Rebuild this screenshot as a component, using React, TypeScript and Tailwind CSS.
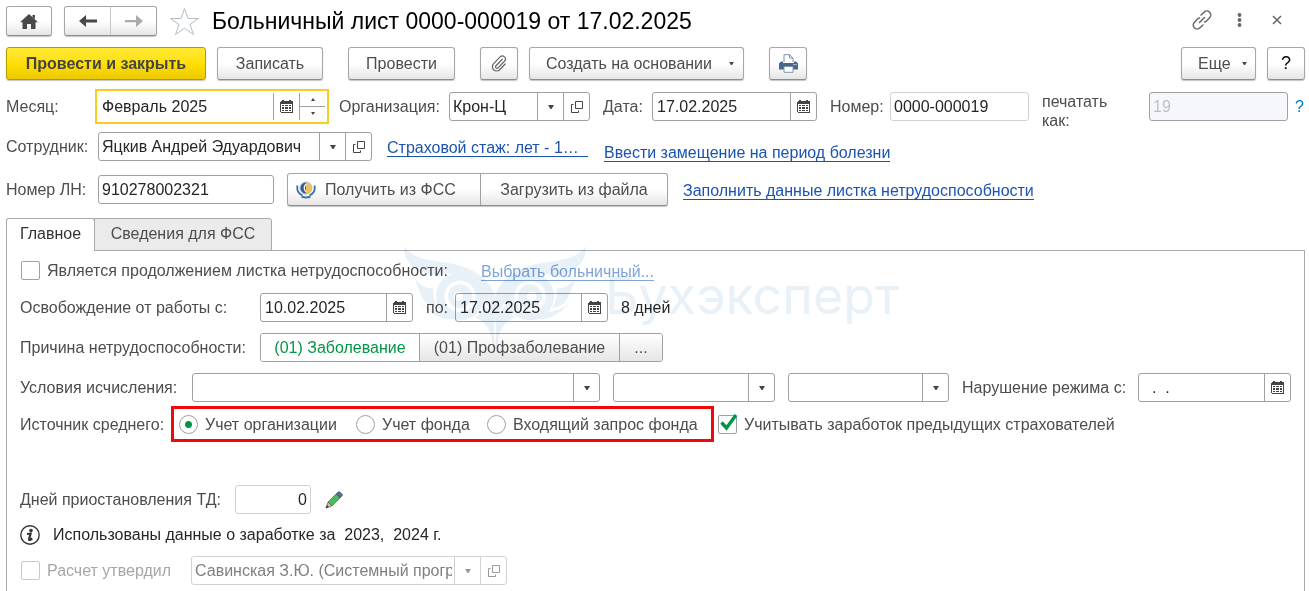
import type { ReactNode } from "react";

const button =
  "flex shrink-0 items-center justify-center rounded-[3px] border border-[#a6a6a6] border-b-[#8c8c8c] bg-linear-to-b from-white from-50% to-[#e6e6e6] text-[#4d4d4d] whitespace-nowrap shadow-[0_1px_1px_#c4c4c4]";
const label = "shrink-0 whitespace-nowrap text-[#4d4d4d]";
const link = "whitespace-nowrap text-[#1a54b0] border-b border-[#1a54b0] leading-[17px]";

function CalendarIcon() {
  return (
    <svg width="13" height="13" viewBox="0 0 13 13" shapeRendering="crispEdges">
      <path d="M1 1H2V0H4V1H9V0H11V1H12L13 2V12L12 13H1L0 12V2z" fill="#444" />
      <path d="M1 4h11v8H1z" fill="white" />
      <path d="M2 5h2v1H2zM5 5h3v1H5zM9 5h2v1H9zM2 7h2v2H2zM5 7h3v2H5zM9 7h2v2H9zM2 10h2v1H2zM5 10h3v1H5zM9 10h2v1H9z" fill="#444" />
    </svg>
  );
}

function OpenIcon() {
  return (
    <svg width="12" height="12" viewBox="0 0 12 12" fill="none" stroke="currentColor">
      <path d="M4.500.5h7v7h-7zM2.500 3.500h-2v8h7v-2" />
    </svg>
  );
}

function Caret() {
  return (
    <svg width="6" height="4" viewBox="0 0 6 4" fill="currentColor">
      <path d="M0 0h6L3.500 4h-1z" />
    </svg>
  );
}

function SmallCaret() {
  return (
    <svg width="5" height="3" viewBox="0 0 5 3" fill="currentColor">
      <path d="M0 0h5L3 3H2z" />
    </svg>
  );
}

function DateField({ id, value, width, name }: { id: string; value: string; width: string; name?: string }) {
  return (
    <div className={`flex h-[29px] shrink-0 overflow-hidden rounded-[3px] border border-[#a0a0a0] bg-white ${width}`}>
      <input id={id} aria-label={name} defaultValue={value} className="min-w-0 flex-1 px-1 text-[#262626] outline-none" />
      <button type="button" aria-label="Открыть календарь" className="flex w-[26px] items-center justify-center border-l border-[#a0a0a0]">
        <CalendarIcon />
      </button>
    </div>
  );
}

function Combo({
  id,
  value,
  width,
  open,
  disabled,
  name,
}: {
  id: string;
  value?: string;
  width: string;
  open?: boolean;
  disabled?: boolean;
  name?: string;
}) {
  const line = disabled ? "border-[#d2d2d2]" : "border-[#a0a0a0]";
  const ink = disabled ? "text-[#999]" : "text-[#444]";
  return (
    <div className={`flex h-[29px] overflow-hidden rounded-[3px] border bg-white ${line} ${ink} ${width}`}>
      <div className="relative min-w-0 flex-1">
        <select
          id={id}
          aria-label={name}
          disabled={disabled}
          className={`h-full w-full appearance-none overflow-hidden pr-7 pl-[3px] text-clip whitespace-nowrap opacity-100 outline-none ${disabled ? "text-[#808080]" : "text-[#262626]"}`}
        >
          <option>{value}</option>
        </select>
        <span className={`pointer-events-none absolute inset-y-0 right-0 flex w-[26px] items-center justify-center border-l ${line}`}>
          <Caret />
        </span>
      </div>
      {open && (
        <button type="button" aria-label="Открыть" className={`flex w-[26px] shrink-0 items-center justify-center border-l ${line}`}>
          <OpenIcon />
        </button>
      )}
    </div>
  );
}

function Radio({ text, checked, width }: { text: string; checked?: boolean; width?: string }) {
  return (
    <label className={`flex shrink-0 items-center gap-[7px] whitespace-nowrap text-[#4d4d4d] ${width ?? ""}`}>
      <input
        type="radio"
        name="source"
        defaultChecked={checked}
        className="size-[19px] appearance-none rounded-full border border-[#a0a0a0] bg-white checked:bg-[radial-gradient(circle,#009646_0_3px,white_4px)]"
      />
      {text}
    </label>
  );
}

function Check({ children, checked, disabled }: { children: ReactNode; checked?: boolean; disabled?: boolean }) {
  return (
    <label className={`flex shrink-0 items-center gap-[7px] whitespace-nowrap ${disabled ? "text-[#a6a6a6]" : "text-[#4d4d4d]"}`}>
      <span className="relative flex">
        <input
          type="checkbox"
          defaultChecked={checked}
          disabled={disabled}
          className={`size-[19px] appearance-none rounded-[2px] border bg-white ${disabled ? "border-[#c8c8c8]" : "border-[#a0a0a0]"}`}
        />
        {checked && (
          <svg className="pointer-events-none absolute -top-[2px] left-0" width="20" height="20" viewBox="0 0 20 20" fill="none" stroke="#009646" strokeWidth="3.400">
            <path d="M3.500 9.500L8.500 15L18 2" />
          </svg>
        )}
      </span>
      {children}
    </label>
  );
}

function Watermark() {
  return (
    <div aria-hidden="true" className="pointer-events-none absolute -top-[13px] left-[388px] z-10 flex text-[#e9f1f8] mix-blend-multiply">
      <svg width="200" height="110" viewBox="0 0 600 330" fill="currentColor">
        <path d="M28 25C65 78 135 62 200 85C262 106 292 140 300 178C308 140 338 106 400 85C465 62 535 78 572 25C576 80 530 112 470 112Q400 80 300 235Q200 80 130 112C70 112 24 80 28 25z" />
        <path d="M57 115Q72 150 115 152Q112 185 130 212Q95 205 82 180Q72 162 57 115zM543 115Q528 150 485 152Q488 185 470 212Q505 205 518 180Q528 162 543 115z" />
        <path d="M75 190Q100 222 150 222Q165 238 185 243Q115 250 75 190zM525 190Q500 222 450 222Q435 238 415 243Q485 250 525 190z" />
        <circle cx="195" cy="175" r="72" />
        <circle cx="405" cy="175" r="72" />
        <g fill="white">
          <circle cx="195" cy="175" r="47" />
          <circle cx="405" cy="175" r="47" />
        </g>
        <circle cx="195" cy="175" r="36" />
        <circle cx="405" cy="175" r="36" />
        <circle cx="190" cy="175" r="14" fill="white" />
        <circle cx="410" cy="175" r="14" fill="white" />
        <path d="M262 200L300 228L338 200Q338 230 362 238Q310 255 306 330H294Q290 255 238 238Q262 230 262 200z" />
        <path d="M300 248V330" stroke="white" strokeWidth="5" />
      </svg>
      <span className="mt-[34px] ml-[10px] font-[Inter,sans-serif] text-[52px] leading-[48px]">Бухэксперт</span>
    </div>
  );
}

export default function App() {
  return (
    <main className="flex min-h-screen flex-col bg-white pt-[6px] pr-1 pl-[6px] font-['Liberation_Sans',Arial,sans-serif] text-[16px] leading-[19px]">
      <header className="flex h-[30px] items-center">
        <button type="button" aria-label="Домой" className={`${button} h-[30px] w-[46px]`}>
          <svg width="18" height="15" viewBox="0 0 18 15" fill="#484848">
            <path d="M9 0L18 8.300H15.500V15H11V10H7V15H2.500V8.300H0zM12.500 1H15V5L12.500 3z" />
          </svg>
        </button>
        <div className={`${button} ml-3 h-[30px] w-[93px]`}>
          <button type="button" aria-label="Назад" className="flex h-full flex-1 items-center justify-center border-r border-[#c8c8c8]">
            <svg width="18" height="12" viewBox="0 0 18 12" fill="#484848">
              <path d="M7 0V4.500H18V7.500H7V12L0 6z" />
            </svg>
          </button>
          <button type="button" aria-label="Вперед" className="flex h-full flex-1 items-center justify-center">
            <svg width="18" height="12" viewBox="0 0 18 12" fill="#aaa">
              <path d="M11 0V5H0V7.200H11V12L18 6z" />
            </svg>
          </button>
        </div>
        <button type="button" aria-label="Добавить в избранное" className="ml-3">
          <svg width="31" height="29" viewBox="0 0 31 29" fill="none" stroke="#b5bcc4">
            <path d="M15.500 1.500L19 11.500H29.500L21 17.500L24.500 27.500L15.500 21.300L6.500 27.500L10 17.500L1.500 11.500H12z" />
          </svg>
        </button>
        <h1 className="ml-3 flex-1 text-[23px] leading-[28px] whitespace-nowrap text-black">Больничный лист 0000-000019 от 17.02.2025</h1>
        <div className="flex items-center pb-[2px] text-[#666]">
          <button type="button" aria-label="Ссылка">
            <svg width="20" height="20" viewBox="0 0 20 20" fill="none" stroke="currentColor" strokeWidth="1.500" strokeLinecap="round">
              <path d="M9 5L12 2.200A3.800 3.800 0 0 1 17.600 7.800L14.500 11A3.800 3.800 0 0 1 12.500 12M11 15L8 17.800A3.800 3.800 0 0 1 2.400 12.200L5.500 9A3.800 3.800 0 0 1 7.500 8M7.500 12.500L12.500 7.500" />
            </svg>
          </button>
          <button type="button" aria-label="Меню" className="ml-[25px]">
            <svg width="5" height="14" viewBox="0 0 5 14" fill="currentColor">
              <circle cx="2.500" cy="2" r="1.900" />
              <circle cx="2.500" cy="7" r="1.900" />
              <circle cx="2.500" cy="12" r="1.900" />
            </svg>
          </button>
          <button type="button" aria-label="Закрыть" className="mr-[23px] ml-[30px]">
            <svg width="10" height="10" viewBox="0 0 10 10" stroke="currentColor" strokeWidth="1.500">
              <path d="M1 1L9 9M9 1L1 9" />
            </svg>
          </button>
        </div>
      </header>

      <div className="mt-[11px] flex h-[33px]">
        <button
          type="button"
          className="w-[200px] shrink-0 rounded-[3px] border border-[#b29a00] bg-linear-to-b from-[#ffe933] via-[#ffe000] to-[#ecc900] font-bold whitespace-nowrap text-[#444] shadow-[0_1px_1px_#c4c4c4]"
        >
          Провести и закрыть
        </button>
        <button type="button" className={`${button} ml-[11px] w-[106px]`}>Записать</button>
        <button type="button" className={`${button} ml-[25px] w-[107px]`}>Провести</button>
        <button type="button" aria-label="Прикрепить файл" className={`${button} ml-[25px] w-[38px]`}>
          <svg width="16" height="17" viewBox="0 0 16 18" fill="none" stroke="#666" strokeWidth="1.300" strokeLinecap="round">
            <path d="M11.500 4.500L4.800 11.400a1.500 1.500 0 0 0 2.200 2.200L13.800 6.600a3.200 3.200 0 0 0-4.600-4.600L2.300 9.200a4.500 4.500 0 0 0 6.400 6.400L14.500 9.500" />
          </svg>
        </button>
        <button type="button" className={`${button} ml-[11px] w-[215px] justify-between! pr-[9px] pl-4`}>
          Создать на основании
          <SmallCaret />
        </button>
        <button type="button" aria-label="Печать" className={`${button} ml-[25px] w-[38px]`}>
          <svg width="19" height="19" viewBox="0 0 19 19">
            <path d="M5 8V.7h5.500L14 4v4" fill="white" stroke="#7d93aa" />
            <path d="M10.500.7V4H14" fill="none" stroke="#7d93aa" />
            <path d="M2 7.500h2V9h11V7.500h2l2 2V15.500H0V9.500z" fill="#44688f" />
            <path d="M5 12.500h9v5.800H5z" fill="white" stroke="#7d93aa" />
            <path d="M14.500 10h1v1h-1zM16.500 10h1v1h-1z" fill="white" />
          </svg>
        </button>
        <button type="button" className={`${button} ml-auto w-[75px] justify-between! pr-[8px] pl-4`}>
          Еще
          <SmallCaret />
        </button>
        <button type="button" aria-label="Справка" className={`${button} ml-[11px] w-[38px] text-[18px] text-black!`}>?</button>
      </div>

      <div className="mt-[9px] flex h-[35px] items-center">
        <label htmlFor="month" className={`${label} w-[89px]`}>Месяц:</label>
        <div className="flex h-[35px] w-[234px] shrink-0 border-2 border-[#fbcb20] p-[2px]">
          <input id="month" defaultValue="Февраль 2025" className="min-w-0 flex-1 pl-[3px] text-[#262626] outline-none" />
          <button type="button" aria-label="Календарь месяца" className="flex w-[26px] items-center justify-center border-l border-[#a0a0a0]">
            <CalendarIcon />
          </button>
          <div className="flex w-[26px] flex-col border-l border-[#a0a0a0] text-[#444]">
            <button type="button" aria-label="Следующий месяц" className="flex flex-1 items-center justify-center border-b border-[#a0a0a0]">
              <svg width="4" height="3" viewBox="0 0 4 3" fill="currentColor"><path d="M0 3L2 0L4 3z" /></svg>
            </button>
            <button type="button" aria-label="Предыдущий месяц" className="flex flex-1 items-center justify-center">
              <svg width="4" height="3" viewBox="0 0 4 3" fill="currentColor"><path d="M0 0L2 3L4 0z" /></svg>
            </button>
          </div>
        </div>
        <label htmlFor="org" className={`${label} ml-[10px] w-[110px]`}>Организация:</label>
        <Combo id="org" value="Крон-Ц" width="w-[141px] shrink-0" open />
        <label htmlFor="date" className={`${label} ml-[13px] w-[49px]`}>Дата:</label>
        <DateField id="date" value="17.02.2025" width="w-[165px]" />
        <label htmlFor="number" className={`${label} ml-[13px] w-[60px]`}>Номер:</label>
        <input id="number" defaultValue="0000-000019" className="h-[29px] w-[139px] shrink-0 rounded-[3px] border border-[#d2d2d2] px-[3px] text-[#262626] outline-none" />
        <label htmlFor="print" className="mt-[9px] ml-[13px] w-[94px] flex-1 pr-5 text-[#4d4d4d]">печатать как:</label>
        <input id="print" disabled defaultValue="19" className="h-[29px] w-[139px] shrink-0 rounded-[3px] border border-[#a0a0a0] bg-[#f6f7fd] px-[3px] text-[#bfbfbf]" />
        <button type="button" aria-label="Подсказка" className="w-[17px] pl-[7px] text-left text-[#0078c8]">?</button>
      </div>

      <div className="mt-2 flex h-[29px] items-center">
        <label htmlFor="employee" className={`${label} w-[92px]`}>Сотрудник:</label>
        <Combo id="employee" value="Яцкив Андрей Эдуардович" width="w-[274px] shrink-0" open />
        <a href="#experience" className={`${link} mt-[2px] ml-[15px] w-[201px] overflow-hidden`}>Страховой стаж: лет - 1…</a>
        <a href="#replacement" className={`${link} mt-[12px] ml-4`}>Ввести замещение на период болезни</a>
      </div>

      <div className="mt-3 flex h-[33px] items-center">
        <label htmlFor="sheet" className={`${label} w-[92px]`}>Номер ЛН:</label>
        <input id="sheet" defaultValue="910278002321" className="h-[29px] w-[176px] shrink-0 rounded-[3px] border border-[#a0a0a0] px-[3px] text-[#262626] outline-none" />
        <div className={`${button} ml-[13px] h-[33px] w-[381px]`}>
          <button type="button" className="flex h-full w-[193px] items-center gap-[9px] border-r border-[#a0a0a0] pl-2">
            <svg width="20" height="18" viewBox="0 0 20 18" fill="none">
              <path d="M1.500 4.500Q0 11 6.500 14.500M18.500 4.500Q20 11 13.500 14.500" stroke="#3f73ad" strokeWidth="1.800" />
              <path d="M5.500 15.500Q10 17.500 14.500 15.500" stroke="#3f73ad" strokeWidth="2.200" />
              <circle cx="10" cy="7" r="6" fill="#f1c15b" stroke="#a9bdd1" />
              <path d="M10 1.500A5.500 5.500 0 0 0 10 12.500z" fill="#315f9e" />
              <path d="M10 3Q6.500 7 10 11" stroke="white" strokeWidth="1.200" />
            </svg>
            Получить из ФСС
          </button>
          <button type="button" className="h-full flex-1">Загрузить из файла</button>
        </div>
        <a href="#fill" className={`${link} mt-[2px] ml-[15px]`}>Заполнить данные листка нетрудоспособности</a>
      </div>

      <div role="tablist" className="relative z-10 mt-3 -mb-px flex h-[33px]">
        <button type="button" role="tab" aria-selected="true" className="w-[89px] rounded-t-[3px] border border-b-0 border-[#a9a9a9] bg-white pb-[3px] text-[#333]">
          Главное
        </button>
        <button type="button" role="tab" aria-selected="false" className="-ml-px w-[178px] rounded-tr-[3px] border border-[#a9a9a9] bg-[#ebebeb] pb-[2px] text-[#4d4d4d]">
          Сведения для ФСС
        </button>
      </div>

      <section className="relative flex-1 border border-b-0 border-[#a9a9a9] pt-[5px] pr-[13px] pl-[13px]">
        <Watermark />
        <div>
          <div className="flex h-[29px] items-center pl-px">
            <div className="w-[444px] shrink-0">
              <Check>Является продолжением листка нетрудоспособности:</Check>
            </div>
            <a href="#choose" className="mt-[2px] ml-4 border-b border-[#7fa3da] leading-[17px] whitespace-nowrap text-[#7fa3da]">Выбрать больничный...</a>
          </div>

          <div className="mt-2 flex h-[29px] items-center">
            <label htmlFor="from" className={`${label} w-[240px]`}>Освобождение от работы с:</label>
            <DateField id="from" value="10.02.2025" width="w-[153px]" />
            <label htmlFor="to" className={`${label} ml-[13px] w-[29px]`}>по:</label>
            <DateField id="to" value="17.02.2025" width="w-[153px]" />
            <span className="ml-[13px] text-[#262626]">8 дней</span>
          </div>

          <div className="mt-[11px] flex h-[29px] items-center">
            <span className={`${label} w-[240px]`}>Причина нетрудоспособности:</span>
            <div className="flex h-[29px] w-[403px] shrink-0 overflow-hidden rounded-[3px] border border-[#a0a0a0] whitespace-nowrap text-[#4d4d4d]">
              <button type="button" className="w-[158px] bg-white text-[#009646]">(01) Заболевание</button>
              <button type="button" className="w-[201px] border-x border-[#a0a0a0] bg-linear-to-b from-white to-[#e6e6e6]">(01) Профзаболевание</button>
              <button type="button" className="flex-1 bg-linear-to-b from-white to-[#e6e6e6]">...</button>
            </div>
          </div>

          <div className="mt-[11px] flex h-[29px] items-center">
            <label htmlFor="terms" className={`${label} w-[172px]`}>Условия исчисления:</label>
            <Combo id="terms" width="min-w-0 flex-1" />
            <Combo id="terms2" name="Условие 2" width="ml-[13px] w-[162px] shrink-0" />
            <Combo id="terms3" name="Условие 3" width="ml-[13px] w-[161px] shrink-0" />
            <label htmlFor="violation" className={`${label} ml-[13px] w-[176px]`}>Нарушение режима с:</label>
            <DateField id="violation" value="  .  ." width="w-[153px] whitespace-pre" />
          </div>

          <div className="mt-1 flex h-[36px] items-center">
            <span className={`${label} w-[151px]`}>Источник среднего:</span>
            <div className="flex h-[36px] w-[543px] shrink-0 items-center border-3 border-[#ee0a0a] pl-[5px]">
              <Radio text="Учет организации" width="w-[177px]" checked />
              <Radio text="Учет фонда" width="w-[131px]" />
              <Radio text="Входящий запрос фонда" />
            </div>
            <div className="ml-1">
              <Check checked>Учитывать заработок предыдущих страхователей</Check>
            </div>
          </div>

          <div className="mt-[43px] flex h-[29px] items-center">
            <label htmlFor="days" className={`${label} w-[215px]`}>Дней приостановления ТД:</label>
            <input id="days" defaultValue="0" className="h-[29px] w-[76px] rounded-[3px] border border-[#d2d2d2] px-[3px] text-right text-[#262626] outline-none" />
            <button type="button" aria-label="Изменить" className="ml-[14px]">
              <svg width="19" height="18" viewBox="0 0 19 18" stroke="#43505c" strokeWidth=".6">
                <path d="M1 17L3 11L7 15z" fill="#f5bd55" />
                <path d="M3 11L11 3L15 7L7 15z" fill="#4cbb5b" />
                <path d="M11 3L13 1Q14 .4 15 1L17.500 3.500Q18 4.300 17 5L15 7z" fill="#5a7184" />
                <path d="M1 17L2 14.300L3.500 16z" fill="#333" />
              </svg>
            </button>
          </div>

          <div className="mt-[6px] flex h-[29px] items-center text-[#262626]">
            <svg className="mr-[13px] shrink-0" width="20" height="20" viewBox="0 0 20 20" fill="none" stroke="#333">
              <circle cx="10" cy="10" r="9.200" strokeWidth="1.400" />
              <circle cx="11" cy="5.500" r="1.800" fill="#333" stroke="none" />
              <path d="M7 9Q9.500 8.500 10.600 8.500L9 14.500Q9 15.800 12.300 13.500" strokeWidth="2.200" />
            </svg>
            <p className="whitespace-pre">Использованы данные о заработке за  2023,  2024 г.</p>
          </div>

          <div className="mt-[7px] flex h-[29px] items-center pl-px">
            <div className="w-[170px] shrink-0">
              <Check disabled>Расчет утвердил</Check>
            </div>
            <Combo id="approver" name="Утвердил" value="Савинская З.Ю. (Системный программист)" width="w-[316px]" open disabled />
          </div>
        </div>
      </section>
    </main>
  );
}
